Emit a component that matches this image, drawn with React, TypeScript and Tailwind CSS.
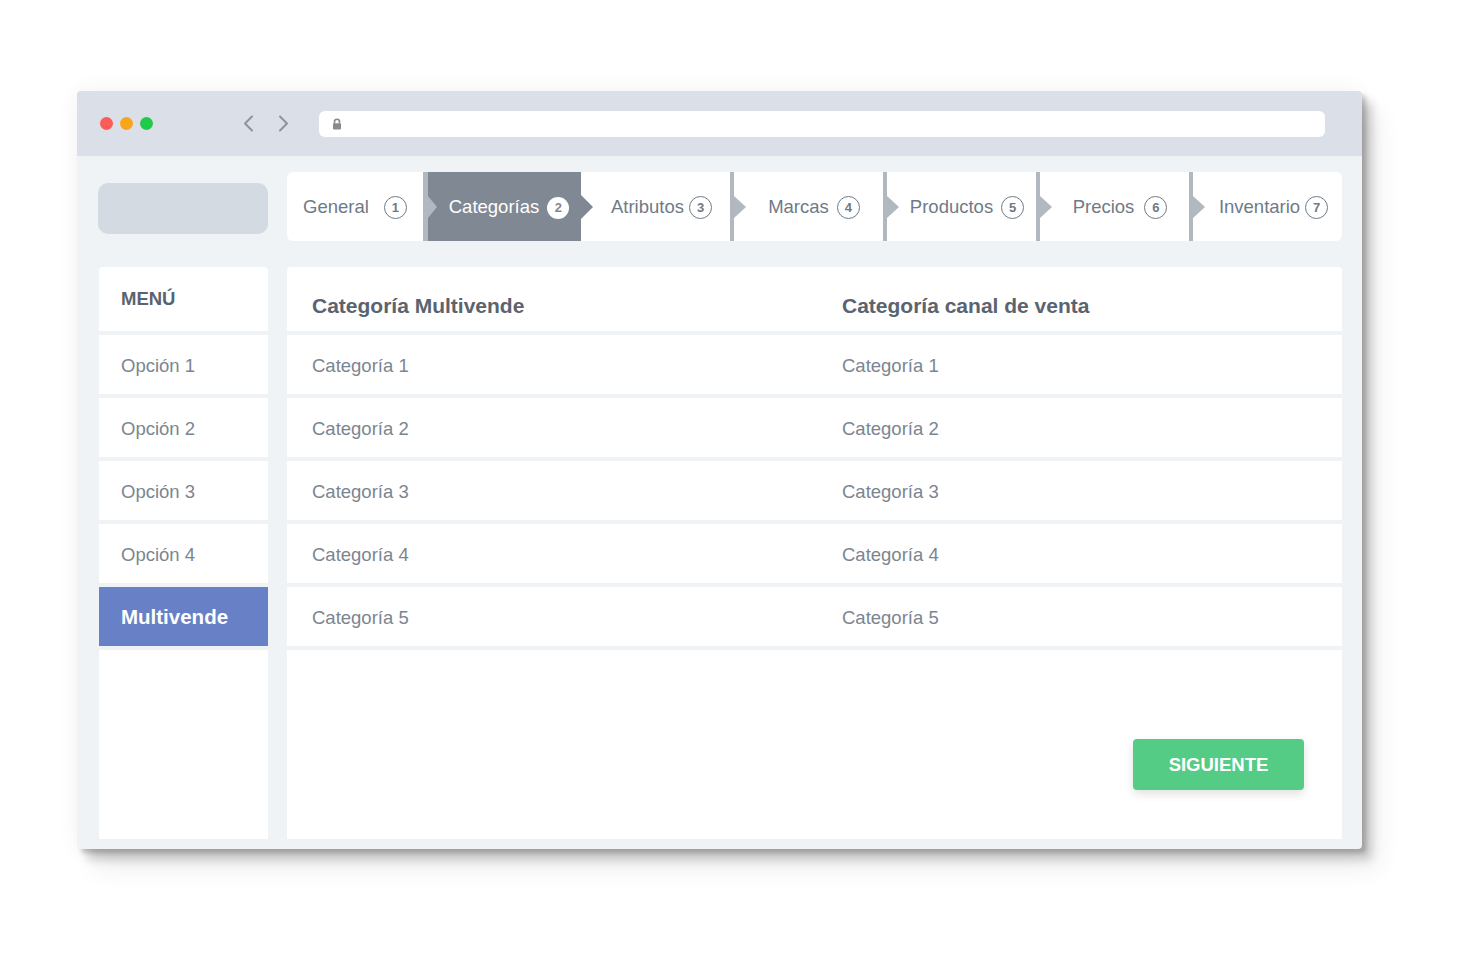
type Tab = {
  label: string;
  n: number;
  width: string;
  gap: string;
  kind: 'first' | 'active' | 'afterActive' | 'divider';
};

const tabs: Tab[] = [
  { label: 'General', n: 1, width: 'w-[136px]', gap: 'gap-[15px]', kind: 'first' },
  { label: 'Categorías', n: 2, width: 'w-[158px]', gap: 'gap-[8px]', kind: 'active' },
  { label: 'Atributos', n: 3, width: 'w-[149px]', gap: 'gap-[5px]', kind: 'afterActive' },
  { label: 'Marcas', n: 4, width: 'w-[153px]', gap: 'gap-[8px]', kind: 'divider' },
  { label: 'Productos', n: 5, width: 'w-[153px]', gap: 'gap-[8px]', kind: 'divider' },
  { label: 'Precios', n: 6, width: 'w-[153px]', gap: 'gap-[10px]', kind: 'divider' },
  { label: 'Inventario', n: 7, width: 'w-[154px]', gap: 'gap-[5px]', kind: 'divider' },
];

const menu = ['Opción 1', 'Opción 2', 'Opción 3', 'Opción 4'];
const rows = [1, 2, 3, 4, 5];

function StepNum({ n, active }: { n: number; active: boolean }) {
  if (active) {
    return (
      <span className="flex h-[22px] w-[22px] items-center justify-center rounded-full bg-white text-[13px] font-bold text-[#7f8893]">
        {n}
      </span>
    );
  }
  return (
    <span className="flex h-[23px] w-[23px] items-center justify-center rounded-full border-[1.5px] border-[#6f7a86] text-[13px] font-bold text-[#6f7a86]">
      {n}
    </span>
  );
}

function StepTab({ tab }: { tab: Tab }) {
  const active = tab.kind === 'active';
  const hasDivider = tab.kind === 'active' || tab.kind === 'divider';

  let box = `relative flex h-full shrink-0 items-center justify-center pt-[2px] ${tab.width} ${tab.gap}`;
  if (active) box += ' border-l-[5px] border-[#b1b8c0] bg-[#7f8893] pl-[9px] text-white';
  else if (tab.kind === 'divider') box += ' border-l-[4px] border-[#b1b8c0] pl-[11px] text-[#6f7a86]';
  else if (tab.kind === 'afterActive') box += ' pl-[12px] text-[#6f7a86]';
  else box += ' text-[#6f7a86]';

  return (
    <div className={box}>
      {hasDivider && (
        <svg
          className="absolute left-0 top-1/2 -translate-y-1/2"
          width={active ? 9 : 12}
          height="22"
          viewBox="0 0 12 22"
          preserveAspectRatio="none"
        >
          <polygon points="0,0 12,11 0,22" fill="#b1b8c0" />
        </svg>
      )}
      <span className="text-[18.5px] leading-none">{tab.label}</span>
      <StepNum n={tab.n} active={active} />
      {active && (
        <svg
          className="absolute left-full top-1/2 z-10 -translate-y-1/2"
          width="12"
          height="24"
          viewBox="0 0 12 24"
        >
          <polygon points="0,0 12,12 0,24" fill="#7f8893" />
        </svg>
      )}
    </div>
  );
}

function Chevron({ dir }: { dir: 'left' | 'right' }) {
  return (
    <svg width="12" height="17" viewBox="0 0 12 17" fill="none">
      <polyline
        points={dir === 'left' ? '10,1.5 3,8.5 10,15.5' : '2,1.5 9,8.5 2,15.5'}
        stroke="#8e9399"
        strokeWidth="2"
        strokeLinecap="round"
        strokeLinejoin="round"
      />
    </svg>
  );
}

export default function App() {
  return (
    <div className="min-h-[969px] w-full bg-white pl-[77px] pt-[91px] font-['Liberation_Sans',Arial,sans-serif]">
      <div className="flex h-[758px] w-[1285px] flex-col overflow-hidden rounded-[4px] bg-[#eff3f6] shadow-[4px_4px_4px_rgba(0,0,0,0.18),10px_11px_10px_rgba(0,0,0,0.16),16px_20px_24px_rgba(0,0,0,0.07),0_0_22px_rgba(0,0,0,0.06)]">
        {/* browser chrome */}
        <div className="flex h-[65px] shrink-0 items-center bg-[#dbe0e8] pl-[23px] pr-[37px]">
          <div className="flex items-center gap-[7px]">
            <span className="h-[13px] w-[13px] rounded-full bg-[#fd5b56]" />
            <span className="h-[13px] w-[13px] rounded-full bg-[#f9a51c]" />
            <span className="h-[13px] w-[13px] rounded-full bg-[#1fcb48]" />
          </div>
          <div className="ml-[89px] flex items-center gap-[24px]">
            <Chevron dir="left" />
            <Chevron dir="right" />
          </div>
          <div className="ml-[29px] flex h-[26px] flex-1 items-center rounded-[6px] bg-white pl-[13px]">
            <svg width="10" height="12" viewBox="0 0 10 12">
              <path d="M2.5 5.5V3.8a2.5 2.5 0 0 1 5 0V5.5" fill="none" stroke="#8a8a8a" strokeWidth="1.6" />
              <rect x="1" y="5.2" width="8" height="6.3" rx="1" fill="#8a8a8a" />
            </svg>
          </div>
        </div>

        {/* body */}
        <div className="flex flex-1 flex-col pl-[21px] pr-[20px] pt-[16px] pb-[10px]">
          <div className="flex h-[69px] items-center gap-[19px]">
            <div className="mt-[4px] h-[51px] w-[170px] shrink-0 rounded-[10px] bg-[#d4dae2]" />
            <div className="flex h-full flex-1 overflow-hidden rounded-[6px] bg-white">
              {tabs.map((t) => (
                <StepTab key={t.n} tab={t} />
              ))}
            </div>
          </div>

          <div className="mt-[26px] flex flex-1 gap-[19px]">
            {/* sidebar */}
            <div className="ml-[1px] flex w-[169px] shrink-0 flex-col gap-[4px] overflow-hidden rounded-t-[4px]">
              <div className="flex h-[64px] items-center bg-white pl-[22px] text-[18.5px] font-bold text-[#5a6370]">
                MENÚ
              </div>
              {menu.map((m) => (
                <div key={m} className="flex h-[59px] items-center bg-white pl-[22px] pt-[2px] text-[18.5px] text-[#7b8591]">
                  {m}
                </div>
              ))}
              <div className="flex h-[59px] items-center bg-[#6881c6] pl-[22px] pt-[2px] text-[20.5px] font-bold text-white">
                Multivende
              </div>
              <div className="flex-1 bg-white" />
            </div>

            {/* table */}
            <div className="flex flex-1 flex-col gap-[4px] overflow-hidden rounded-t-[4px]">
              <div className="grid h-[64px] grid-cols-[555px_1fr] items-center bg-white pt-[14px] text-[21px] font-bold text-[#5a6370]">
                <span className="pl-[25px]">Categoría Multivende</span>
                <span>Categoría canal de venta</span>
              </div>
              {rows.map((r) => (
                <div key={r} className="grid h-[59px] grid-cols-[555px_1fr] items-center bg-white pt-[2px] text-[18.5px] text-[#7b8591]">
                  <span className="pl-[25px]">Categoría {r}</span>
                  <span>Categoría {r}</span>
                </div>
              ))}
              <div className="flex flex-1 items-end justify-end bg-white pb-[49px] pr-[38px]">
                <button className="flex h-[51px] w-[171px] items-center justify-center rounded-[4px] bg-[#55cc86] text-[18.5px] font-bold text-white shadow-[0_4px_10px_rgba(0,0,0,0.12)]">
                  SIGUIENTE
                </button>
              </div>
            </div>
          </div>
        </div>
      </div>
    </div>
  );
}
